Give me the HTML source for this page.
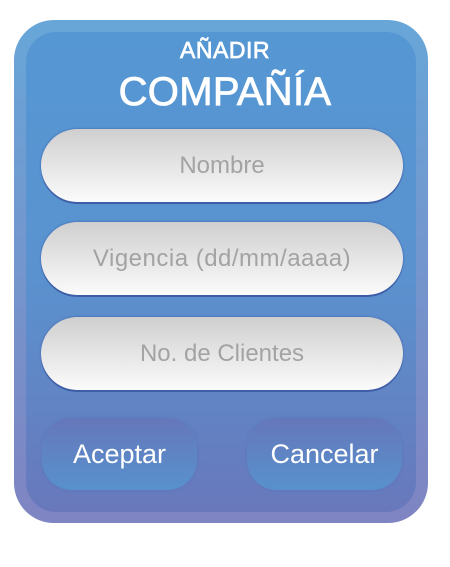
<!DOCTYPE html>
<html><head><meta charset="utf-8"><style>
body{margin:0;width:450px;height:567px;background:#fff;font-family:"Liberation Sans",sans-serif;position:relative;overflow:hidden}
.outer{position:absolute;left:14px;top:20px;width:414px;height:503px;border-radius:40px;background:linear-gradient(#68a6d8,#7f84c2)}
.inner{position:absolute;left:26px;top:32px;width:390px;height:480px;border-radius:30px;background:linear-gradient(#5597d3 0%,#5a92cf 50%,#6878bb 100%)}
.t1{position:absolute;left:0;width:450px;top:39px;line-height:1;text-align:center;color:#fff;font-size:23px;-webkit-text-stroke:0.7px #fff;letter-spacing:0.5px}
.t2{position:absolute;left:0;width:450px;top:72px;line-height:1;text-align:center;color:#fff;font-size:40px;-webkit-text-stroke:0.8px #fff;letter-spacing:0.3px}
.f{position:absolute;left:41px;width:362px;height:73px;border-radius:37px;background:linear-gradient(#cfcfcf,#fbfbfb);box-shadow:0 2px 0 #3d5da6,0 0 2px #3d5da6;color:#a3a3a3;font-size:24px;text-align:center;line-height:73px}
.b{position:absolute;top:418px;width:155px;height:72px;border-radius:30px;background:linear-gradient(#6577ba,#5891cd);box-shadow:0 0 3px #5577bb;color:#fff;font-size:27px;text-align:center;line-height:72px}
</style></head><body>
<div class="outer"></div><div class="inner"></div>
<div class="t1">AÑADIR</div>
<div class="t2">COMPAÑÍA</div>
<div class="f" style="top:129px">Nombre</div>
<div class="f" style="top:222px;letter-spacing:0.5px">Vigencia (dd/mm/aaaa)</div>
<div class="f" style="top:317px">No. de Clientes</div>
<div class="b" style="left:42px">Aceptar</div>
<div class="b" style="left:247px">Cancelar</div>
</body></html>
